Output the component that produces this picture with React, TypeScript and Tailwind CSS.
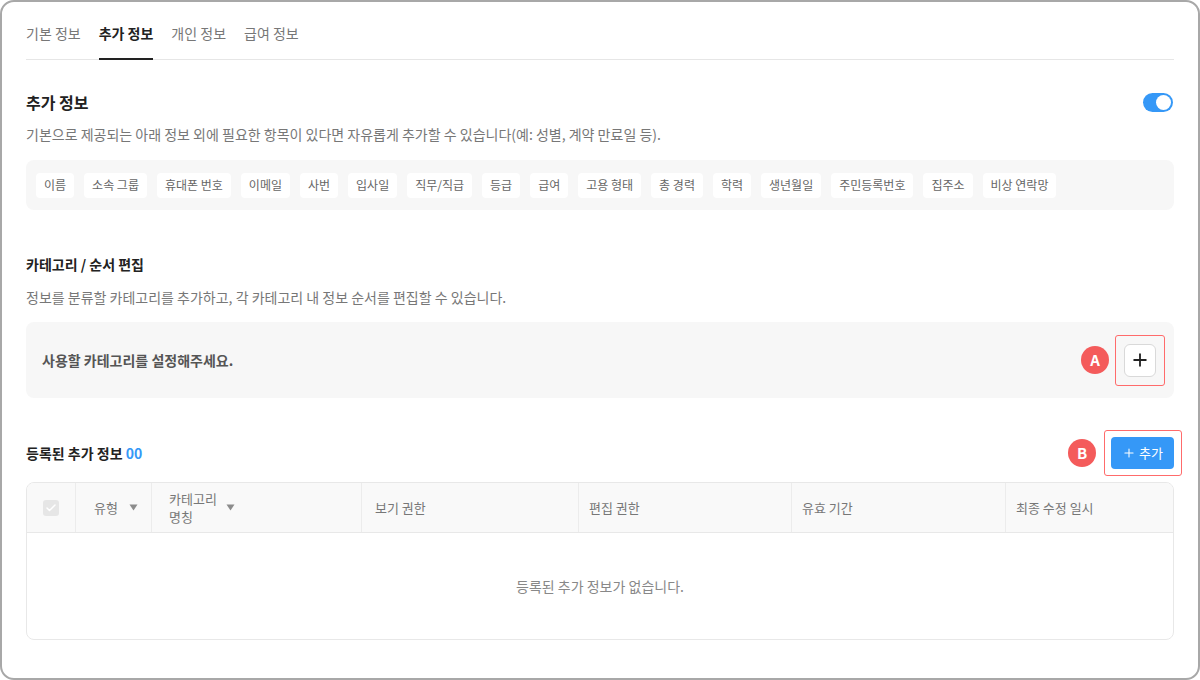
import { Plus, Check } from 'lucide-react';

const TABS = ['기본 정보', '추가 정보', '개인 정보', '급여 정보'];

const FIELDS = [
  '이름',
  '소속 그룹',
  '휴대폰 번호',
  '이메일',
  '사번',
  '입사일',
  '직무/직급',
  '등급',
  '급여',
  '고용 형태',
  '총 경력',
  '학력',
  '생년월일',
  '주민등록번호',
  '집주소',
  '비상 연락망',
];

/** 주석용 빨간 원형 배지 */
function Marker({ label }: { label: string }) {
  return (
    <span className="flex h-7 w-7 shrink-0 items-center justify-center rounded-full bg-[#f45b5b] text-[15px] font-bold text-white">
      {label}
    </span>
  );
}

function SortArrow() {
  return (
    <svg width="9" height="7" viewBox="0 0 9 7" className="shrink-0">
      <path d="M0.5 0.5h8L4.5 6.5z" fill="#8c8c8c" />
    </svg>
  );
}

export default function App() {
  return (
    <div
      className="h-[680px] w-[1200px] overflow-hidden rounded-[14px] border-2 border-[#a8a8a8] bg-white px-6 pt-5"
      style={{ fontFamily: '"Noto Sans CJK KR", "Noto Sans", sans-serif' }}
    >
      {/* 탭 */}
      <div className="flex gap-[18px] border-b border-[#e6e6e6]">
        {TABS.map((t) => (
          <button
            key={t}
            className={`-mb-px h-[38px] border-b-2 pb-[14px] text-left text-[14px] leading-[22px] ${
              t === '추가 정보'
                ? 'border-[#222] font-bold text-[#222]'
                : 'border-transparent text-[#777]'
            }`}
          >
            {t}
          </button>
        ))}
      </div>

      {/* 추가 정보 */}
      <div className="mt-[30px] flex h-6 items-center justify-between">
        <h2 className="text-[16px] font-bold text-[#222]">추가 정보</h2>
        <span className="mr-px flex h-[19px] w-[30px] items-center justify-end rounded-full bg-[#3598f7] px-[2px]">
          <span className="h-[15px] w-[15px] rounded-full bg-white" />
        </span>
      </div>
      <p className="mt-[10px] text-[14px] leading-5 text-[#777]">
        기본으로 제공되는 아래 정보 외에 필요한 항목이 있다면 자유롭게 추가할 수 있습니다(예: 성별, 계약 만료일 등).
      </p>
      <div className="mt-4 flex h-[50px] items-center gap-[10px] rounded-lg bg-[#f7f7f7] px-[10px]">
        {FIELDS.map((f) => (
          <span
            key={f}
            className="flex h-[25px] items-center rounded bg-white px-2 text-[12px] text-[#666]"
          >
            {f}
          </span>
        ))}
      </div>

      {/* 카테고리 / 순서 편집 */}
      <h3 className="mt-[44px] text-[14px] font-bold leading-5 text-[#222]">카테고리 / 순서 편집</h3>
      <p className="mt-[13px] text-[14px] leading-5 text-[#777]">
        정보를 분류할 카테고리를 추가하고, 각 카테고리 내 정보 순서를 편집할 수 있습니다.
      </p>
      <div className="mt-[15px] flex h-[76px] items-center justify-between rounded-lg bg-[#f7f7f7] pl-4 pr-[9px]">
        <span className="text-[14px] font-bold text-[#555]">사용할 카테고리를 설정해주세요.</span>
        <div className="flex items-center gap-[6px]">
          <Marker label="A" />
          <div className="rounded-[3px] border border-[#ff6b6b] p-2">
            <button className="flex h-[33px] w-[32px] items-center justify-center rounded-md border border-[#d9d9d9] bg-white text-[#222]">
              <Plus size={20} strokeWidth={2.2} />
            </button>
          </div>
        </div>
      </div>

      {/* 등록된 추가 정보 */}
      <div className="mt-[32px] flex items-center justify-between">
        <h3 className="text-[14px] font-bold text-[#222]">
          등록된 추가 정보 <span className="text-[#3598f7]">00</span>
        </h3>
        <div className="-mr-2 flex items-center gap-2">
          <Marker label="B" />
          <div className="rounded-[3px] border border-[#ff6b6b] p-[6px] pr-[7px]">
            <button className="flex h-8 w-[63px] items-center justify-center gap-[3px] rounded bg-[#3598f7] text-[13px] text-white">
              <Plus size={14} strokeWidth={1.8} />
              추가
            </button>
          </div>
        </div>
      </div>

      <div className="mt-[6px] overflow-hidden rounded-lg border border-[#e8e8e8]">
        <div className="grid h-[50px] grid-cols-[49px_76px_210px_217px_213px_214px_1fr] border-b border-[#e8e8e8] bg-[#f9f9f9] text-[13px] text-[#777]">
          <div className="flex items-center justify-center border-r border-[#ececec]">
            <span className="flex h-4 w-4 items-center justify-center rounded-[3px] bg-[#e6e6e6] text-white">
              <Check size={12} strokeWidth={3} />
            </span>
          </div>
          <div className="flex items-center gap-[11px] border-r border-[#ececec] pl-[18px]">
            유형 <SortArrow />
          </div>
          <div className="flex items-center gap-[9px] border-r border-[#ececec] pl-[17px]">
            <span className="leading-[18px]">
              카테고리
              <br />
              명칭
            </span>
            <SortArrow />
          </div>
          <div className="flex items-center border-r border-[#ececec] pl-[13px]">보기 권한</div>
          <div className="flex items-center border-r border-[#ececec] pl-[10px]">편집 권한</div>
          <div className="flex items-center border-r border-[#ececec] pl-[10px]">유효 기간</div>
          <div className="flex items-center pl-[10px]">최종 수정 일시</div>
        </div>
        <div className="flex h-[106px] items-center justify-center text-[14px] text-[#888]">
          등록된 추가 정보가 없습니다.
        </div>
      </div>
    </div>
  );
}
